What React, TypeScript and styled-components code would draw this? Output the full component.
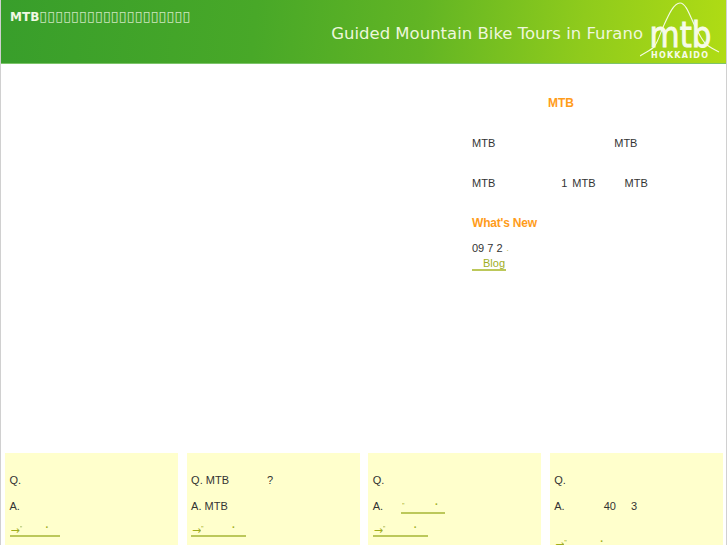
import React from "react";
import styled, { createGlobalStyle } from "styled-components";

const Global = createGlobalStyle`
  html, body { margin: 0; padding: 0; background: #fff; overflow: hidden; }
  body { font-family: "Liberation Sans", Arial, sans-serif; font-size: 11px; color: #333; }
`;

const Page = styled.div`
  width: 727px; height: 545px; box-sizing: border-box; overflow: hidden;
  border-left: 1px solid #d0d0d0; border-right: 1px solid #d0d0d0;
  display: flex; flex-direction: column;
`;
const Header = styled.header`
  height: 64px; box-sizing: border-box; flex: none;
  background: linear-gradient(96deg, #389e2b 0%, #48a828 35%, #62b524 58%, #8fcb1c 80%, #b0dc14 100%);
  border-bottom: 1px solid #7cc46a;
  display: flex; align-items: flex-start; justify-content: space-between;
  padding: 9px 0 0 9px; position: relative;
`;
const SiteTitle = styled.h1`
  margin: 0; font: bold 12px/14px "DejaVu Sans", sans-serif; color: #f1f8e4; white-space: nowrap;
`;
const Tofu = styled.span`
  font-weight: normal; font-size: 14px; letter-spacing: .25px; opacity: .8;
`;
const Tagline = styled.div`
  font: 16.5px/20px "DejaVu Sans", sans-serif; color: #eef7dc; white-space: nowrap;
  margin: 15px 83px 0 0;
`;
const Logo = styled.svg`
  position: absolute; right: 2px; top: 0;
`;
const Main = styled.main`
  height: 389px; flex: none; box-sizing: border-box; padding: 32px 0 0 471px;
`;
const Heading = styled.h2`
  margin: 0 0 0 76px; font: bold 12px/14px "Liberation Sans", sans-serif; color: #ff9c1a;
`;
const NewsHeading = styled.h3`
  margin: 26px 0 0; font: bold 12px/14px "Liberation Sans", sans-serif; color: #ff9c1a; letter-spacing: -.2px;
`;
const Line = styled.p<{ $top: number }>`
  margin: ${p => p.$top}px 0 0; display: flex; line-height: 13px; height: 13px; white-space: nowrap;
`;
const Seg = styled.span<{ $left?: number }>`
  margin-left: ${p => p.$left ?? 0}px;
`;
const BlogLink = styled.a`
  display: block; width: 34px; box-sizing: border-box; margin-top: 2px; padding-left: 11px;
  color: #a0ae1e; line-height: 12px; border-bottom: 2px solid #bcc85a; text-decoration: none;
`;
const Dot = styled.span`
  color: #a0ae1e; font-size: 8px; margin-left: 4px;
`;
const Cards = styled.section`
  display: grid; grid-template-columns: repeat(4, 173px); column-gap: 8.6px;
  padding-left: 4px; height: 92px; overflow: hidden;
`;
const Card = styled.article`
  background: #ffffcc; height: 92px; padding: 21px 0 0 4.5px; box-sizing: border-box; color: #333;
`;
const Row = styled.div<{ $top?: number }>`
  display: flex; height: 13px; line-height: 13px; margin-top: ${p => p.$top ?? 0}px; white-space: nowrap;
`;
const FaqLink = styled.a<{ $w: number; $left?: number }>`
  display: flex; width: ${p => p.$w}px; margin-left: ${p => p.$left ?? 0}px; height: 12px; flex: none;
  border-bottom: 2px solid #bcc85a; color: #a0ae1e; line-height: 12px; align-items: flex-start;
  text-decoration: none;
`;
const Arrow = styled.span`
  font: 11px/15px "DejaVu Sans", sans-serif; width: 9px; margin-left: 1px; overflow: hidden;
`;
const Quote = styled.span<{ $left?: number }>`
  font-size: 7px; line-height: 8px; width: 3px; overflow: hidden; margin: 2px 0 0 ${p => p.$left ?? 0}px;
`;
const Mid = styled.span<{ $left: number }>`
  font-size: 10px; line-height: 10px; font-weight: bold; margin-left: ${p => p.$left}px;
`;

const tofu = "▯".repeat(19);

function Faq({ w, dot, arrow = true, left }: { w: number; dot: number; arrow?: boolean; left?: number }) {
  return (
    <FaqLink $w={w} $left={left} href="#">
      {arrow ? <Arrow>→</Arrow> : null}
      <Quote $left={arrow ? 0 : 1}>"</Quote>
      <Mid $left={dot}>·</Mid>
    </FaqLink>
  );
}

export default function App() {
  return (
    <>
      <Global />
      <Page>
        <Header>
          <SiteTitle>MTB<Tofu>{tofu}</Tofu></SiteTitle>
          <Tagline>Guided Mountain Bike Tours in Furano</Tagline>
          <Logo width="84" height="62" viewBox="0 0 84 62" aria-label="mtb HOKKAIDO">
            <path d="M0 56 C6 52 11 50 14 47 C19 40 20 33 24 25 C29 14 34 3 40 3 C47 3 51 20 57 30 C60 36 63 42 67 45 C71 48 75 50 79 52"
              fill="none" stroke="#f4fbe4" strokeWidth="1.1" />
            <text x="9.5" y="47" fontFamily="'DejaVu Sans', sans-serif" fontSize="35" fill="#f6fbe8" stroke="#f6fbe8" strokeWidth="0.9" textLength="62" lengthAdjust="spacingAndGlyphs">mtb</text>
            <text x="11" y="57.5" fontFamily="'DejaVu Sans', sans-serif" fontWeight="bold" fontSize="8" fill="#f6fbe8" textLength="57">HOKKAIDO</text>
          </Logo>
        </Header>
        <Main>
          <Heading>MTB</Heading>
          <Line $top={27}><Seg>MTB</Seg><Seg $left={119}>MTB</Seg></Line>
          <Line $top={27}><Seg>MTB</Seg><Seg $left={66}>1</Seg><Seg $left={5}>MTB</Seg><Seg $left={29}>MTB</Seg></Line>
          <NewsHeading>What's New</NewsHeading>
          <Line $top={12}><Seg>09 7 2</Seg><Dot>.</Dot></Line>
          <BlogLink href="#">Blog</BlogLink>
        </Main>
        <Cards>
          <Card>
            <Row>Q.</Row>
            <Row $top={13}>A.</Row>
            <Row $top={10}><Faq w={50} dot={23} /></Row>
          </Card>
          <Card>
            <Row>Q. MTB<Seg $left={38}>?</Seg></Row>
            <Row $top={13}>A. MTB</Row>
            <Row $top={10}><Faq w={55} dot={28} /></Row>
          </Card>
          <Card>
            <Row>Q.</Row>
            <Row $top={13}>A.<Faq w={44} left={18} dot={30} arrow={false} /></Row>
            <Row $top={10}><Faq w={55} dot={28} /></Row>
          </Card>
          <Card>
            <Row>Q.</Row>
            <Row $top={13}>A.<Seg $left={39}>40</Seg><Seg $left={15}>3</Seg></Row>
            <Row $top={24}><Faq w={55} dot={33} /></Row>
          </Card>
        </Cards>
      </Page>
    </>
  );
}
